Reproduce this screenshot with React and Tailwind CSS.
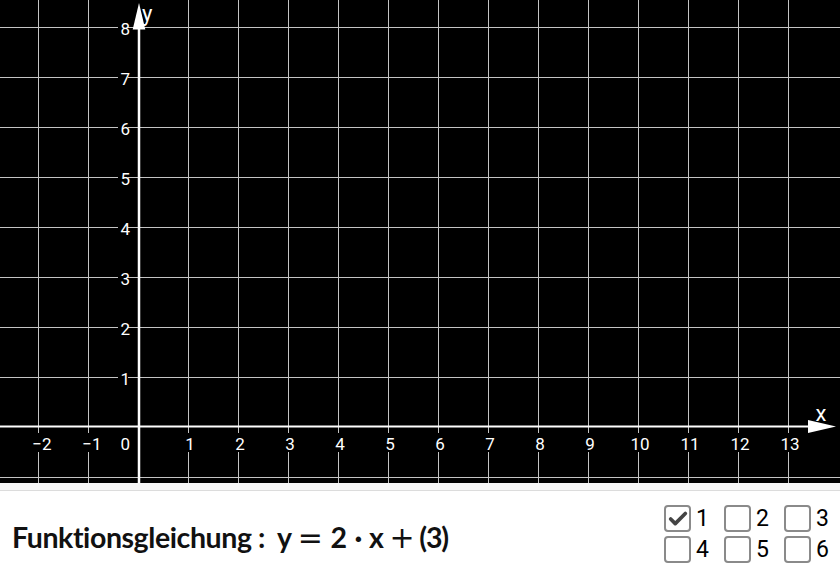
import { Check } from "lucide-react";

const W = 840;
const H = 483;
const OX = 139;
const OY = 426.5;
const UNIT = 50;

const xs = Array.from({ length: 16 }, (_, i) => i - 2); // -2 .. 13
const ys = Array.from({ length: 10 }, (_, i) => i - 1); // -1 .. 8

const fmt = (n) => (n < 0 ? `\u2212${-n}` : `${n}`);
const labelWidth = (n) => String(Math.abs(n)).length * 9.4 + (n < 0 ? 10 : 0);

function Graph() {
  const gx = (k) => Math.round(OX + k * UNIT) - 0.5;
  const gy = (k) => Math.round(OY - k * UNIT) + 0.5;

  return (
    <svg width={W} height={H} className="block" style={{ fontFamily: "Roboto, sans-serif" }}>
      <rect width={W} height={H} fill="#000" />

      {/* grid */}
      {xs.filter((k) => k !== 0).map((k) => (
        <line key={`gx${k}`} x1={gx(k)} x2={gx(k)} y1={0} y2={H} stroke="#c4c4c4" strokeWidth="1" />
      ))}
      {ys.filter((k) => k !== 0).map((k) => (
        <line key={`gy${k}`} x1={0} x2={W} y1={gy(k)} y2={gy(k)} stroke="#c4c4c4" strokeWidth="1" />
      ))}

      {/* label backgrounds */}
      {xs.filter((k) => k !== 0).map((k) => {
        const w = labelWidth(k) + 2;
        const cx = OX + k * UNIT + (k < 0 ? 3 : 1);
        return <rect key={`bx${k}`} x={cx - w / 2} y={433} width={w} height={19} fill="#000" />;
      })}
      {ys.filter((k) => k > 0).map((k) => (
        <rect key={`by${k}`} x={118} y={OY - k * UNIT - 8} width={12} height={19} fill="#000" />
      ))}
      <rect x={118} y={433} width={12} height={19} fill="#000" />

      {/* ticks */}
      {ys.filter((k) => k !== 0).map((k) => (
        <line key={`ty${k}`} x1={128} x2={OX} y1={gy(k)} y2={gy(k)} stroke="#c4c4c4" strokeWidth="1" />
      ))}

      {/* axes */}
      <line x1={0} x2={810} y1={OY} y2={OY} stroke="#fff" strokeWidth="2" />
      <polygon points="808,420 836,426.5 808,433" fill="#fff" />
      <line x1={OX} x2={OX} y1={H} y2={28} stroke="#fff" strokeWidth="2.5" />
      <polygon points="132.7,29.5 139,3 145.3,29.5" fill="#fff" />

      {/* labels */}
      {xs.filter((k) => k !== 0).map((k) => (
        <text
          key={`lx${k}`}
          x={OX + k * UNIT + (k < 0 ? 3 : 1)}
          y={450}
          textAnchor="middle"
          fontSize="17"
          fill="#fff"
        >
          {fmt(k)}
        </text>
      ))}
      {ys.filter((k) => k > 0).map((k) => (
        <text key={`ly${k}`} x={130} y={OY - k * UNIT + 8.3} textAnchor="end" fontSize="17" fill="#fff">
          {k}
        </text>
      ))}
      <text x={130} y={450} textAnchor="end" fontSize="17" fill="#fff">
        0
      </text>
      <text x={821} y={421} textAnchor="middle" fontSize="22" fill="#fff">
        x
      </text>
      <text x={142} y={21} fontSize="22" fill="#fff">
        y
      </text>
    </svg>
  );
}

function Box({ n, checked }) {
  return (
    <div className="flex items-center h-[27px]">
      <div className="w-[27px] h-[27px] rounded-[4px] border-2 border-[#8a8a8a] bg-white flex items-center justify-center">
        {checked && <Check className="w-[22px] h-[22px] text-[#444]" strokeWidth={4} />}
      </div>
      <span className="ml-[5px] text-[23px] leading-none text-black">{n}</span>
    </div>
  );
}

// wide operator glyphs in the formula
const Op = ({ children, className }) => (
  <span className={className} style={{ fontFamily: "'DejaVu Sans', sans-serif", fontWeight: 400 }}>
    {children}
  </span>
);

export default function App() {
  return (
    <div className="w-[840px] h-[575px] bg-white overflow-hidden" style={{ fontFamily: "Roboto, sans-serif" }}>
      <Graph />
      <div className="h-[8px] bg-[#f6f6f6] border-b border-[#dcdcdc]" />
      <div className="flex items-start h-[84px]">
        <div
          className="w-[664px] shrink-0 pl-[12px] pt-[24px] text-[28.5px] font-bold text-[#111] whitespace-nowrap tracking-[-0.4px]"
          style={{ fontFamily: "Lato, sans-serif" }}
        >
          <span>Funktionsgleichung :</span>
          <span className="ml-[12px]">y</span>
          <Op className="ml-[6px] text-[30px]">=</Op>
          <span className="ml-[8px]">2</span>
          <span className="ml-[8px]">·</span>
          <span className="ml-[7px]">x</span>
          <Op className="ml-[6px] text-[30px]">+</Op>
          <span className="ml-[5px] tracking-[-1.2px]">(3)</span>
        </div>
        <div className="mt-[14px] grid grid-cols-[60px_60px_46px] gap-y-[4px]">
          <Box n="1" checked />
          <Box n="2" />
          <Box n="3" />
          <Box n="4" />
          <Box n="5" />
          <Box n="6" />
        </div>
      </div>
    </div>
  );
}
